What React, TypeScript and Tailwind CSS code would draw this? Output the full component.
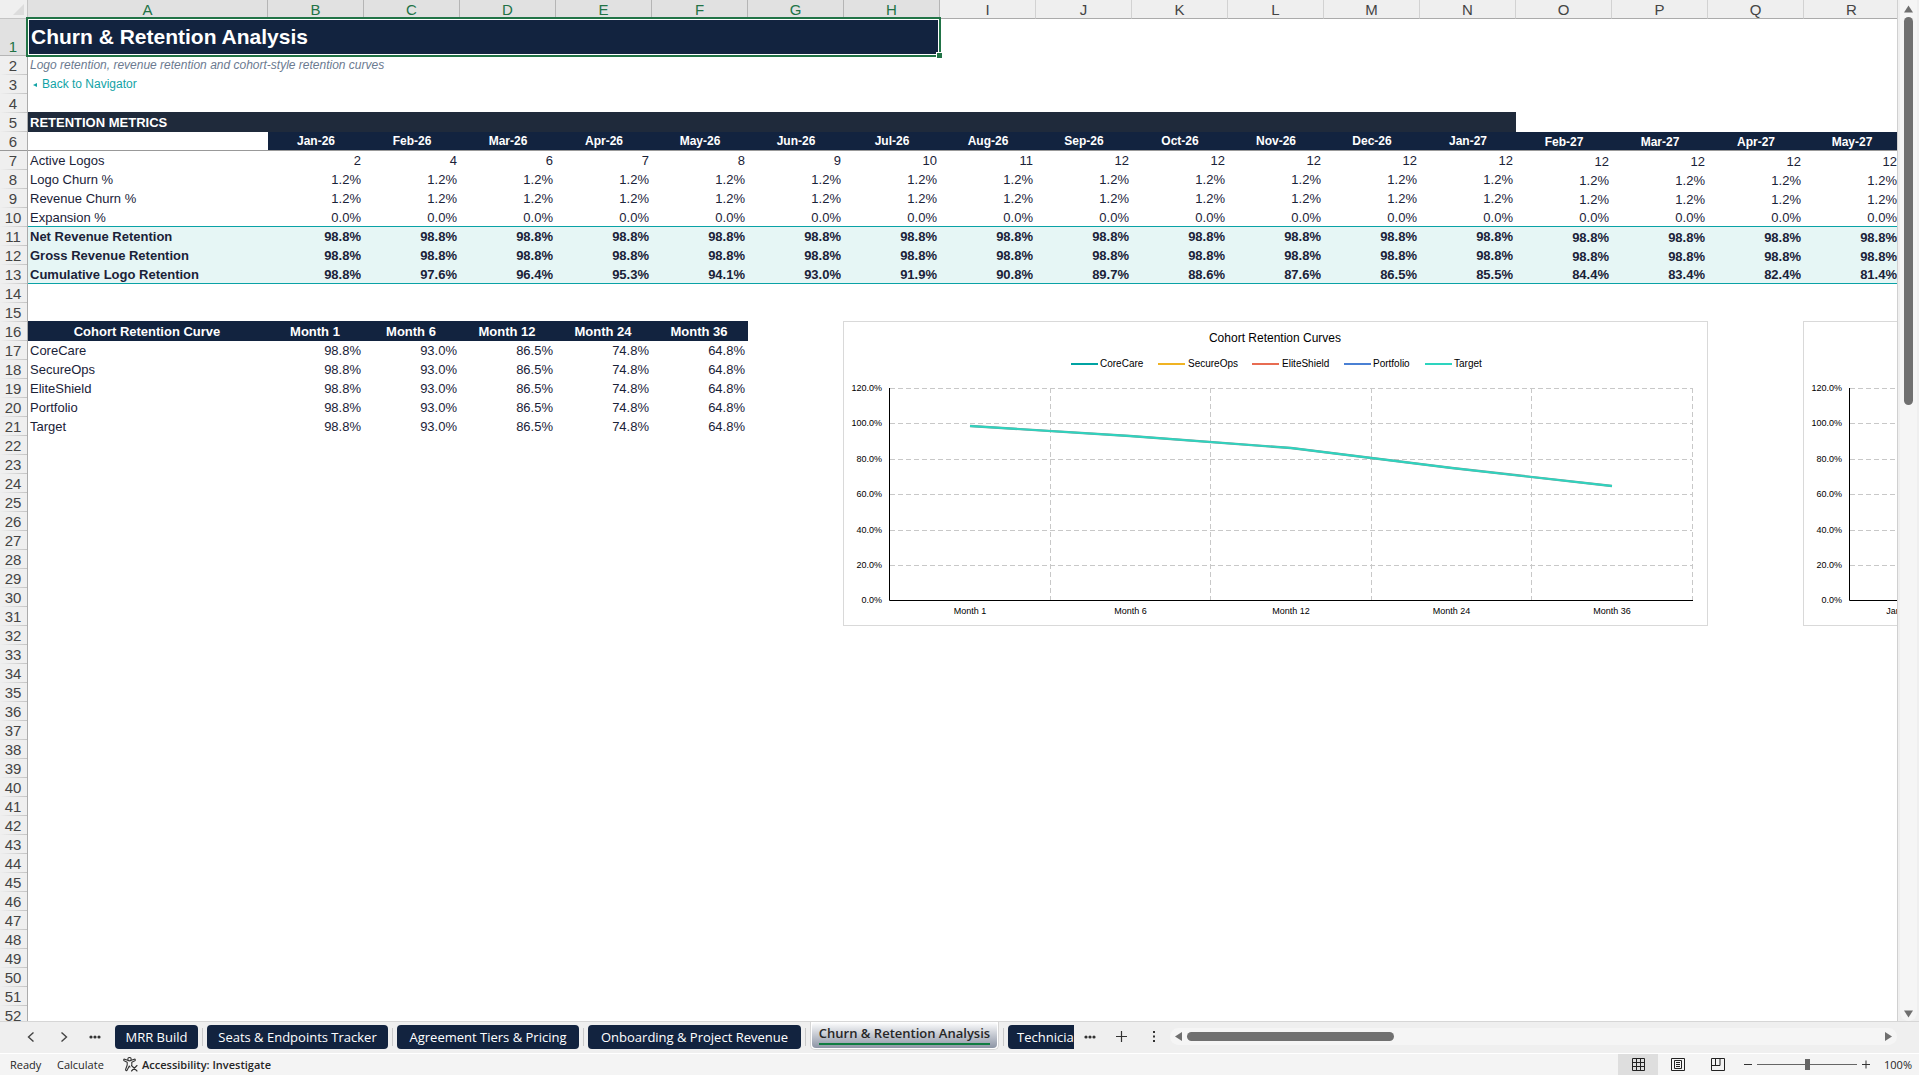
import type { ReactNode } from "react";

const COLUMNS = "ABCDEFGHIJKLMNOPQR".split("");
const SELECTED = "ABCDEFGH";
const MONTHS = [
  "Jan-26", "Feb-26", "Mar-26", "Apr-26", "May-26", "Jun-26", "Jul-26", "Aug-26", "Sep-26",
  "Oct-26", "Nov-26", "Dec-26", "Jan-27", "Feb-27", "Mar-27", "Apr-27", "May-27",
];
const same = (value: string) => MONTHS.map(() => value);

const METRICS = [
  { row: 7, label: "Active Logos", values: ["2", "4", "6", "7", "8", "9", "10", "11", "12", "12", "12", "12", "12", "12", "12", "12", "12"] },
  { row: 8, label: "Logo Churn %", values: same("1.2%") },
  { row: 9, label: "Revenue Churn %", values: same("1.2%") },
  { row: 10, label: "Expansion %", values: same("0.0%") },
  { row: 11, label: "Net Revenue Retention", values: same("98.8%") },
  { row: 12, label: "Gross Revenue Retention", values: same("98.8%") },
  {
    row: 13,
    label: "Cumulative Logo Retention",
    values: [
      "98.8%", "97.6%", "96.4%", "95.3%", "94.1%", "93.0%", "91.9%", "90.8%", "89.7%",
      "88.6%", "87.6%", "86.5%", "85.5%", "84.4%", "83.4%", "82.4%", "81.4%",
    ],
  },
];

const COHORT_MONTHS = ["Month 1", "Month 6", "Month 12", "Month 24", "Month 36"];
const COHORT_VALUES = ["98.8%", "93.0%", "86.5%", "74.8%", "64.8%"];
const COHORTS = ["CoreCare", "SecureOps", "EliteShield", "Portfolio", "Target"];
const EMPTY_ROWS = Array.from({ length: 31 }, (_, i) => i + 22);

function SheetRow({ n, children }: { n: number; children?: ReactNode }) {
  const first = n === 1;
  return (
    <tr className={first ? "h-[37px]" : "h-[19px]"}>
      <th
        scope="row"
        className={
          "border-r border-[#ababab] bg-[length:100%_1px] bg-bottom bg-no-repeat p-0 pr-px text-center text-[15px] leading-[18px] font-normal " +
          (first
            ? "bg-[#e1e1e1] bg-[linear-gradient(to_right,#b5b5b5,#b5b5b5)] align-bottom text-[#217346]"
            : n === 6
              ? "bg-[#efefef] bg-[linear-gradient(to_right,#999,#999)] align-bottom text-[#444]"
              : "bg-[#efefef] bg-[linear-gradient(to_right,#efefef,#c4c4c4)] align-bottom text-[#444]")
        }
      >
        {n}
      </th>
      {children ?? <td colSpan={18} className="p-0" />}
    </tr>
  );
}

const AXIS = ["120.0%", "100.0%", "80.0%", "60.0%", "40.0%", "20.0%", "0.0%"];
const GRID_Y = [67, 102, 138, 173, 209, 244, 279];
const GRID_X = [207, 367, 528, 688, 849];
const LEGEND = [
  { name: "CoreCare", color: "#00a3a3", x: 228, text: 257 },
  { name: "SecureOps", color: "#f0b323", x: 315, text: 345 },
  { name: "EliteShield", color: "#e86c52", x: 409, text: 439 },
  { name: "Portfolio", color: "#4a80d4", x: 501, text: 530 },
  { name: "Target", color: "#2dd4bf", x: 582, text: 611 },
];

interface ChartProps {
  title?: string;
  categories: string[];
  firstX: number;
  points?: string;
  legend?: boolean;
}

function Chart({ title, categories, firstX, points, legend }: ChartProps) {
  return (
    <svg
      role="img"
      aria-label={title ?? "Retention by month"}
      width="865"
      height="305"
      viewBox="0 0 865 305"
      className="block shrink-0 bg-white font-['Liberation_Sans',sans-serif]"
    >
      <rect x="0.5" y="0.5" width="864" height="304" fill="none" stroke="#d9d9d9" />
      {title && (
        <text x="432" y="21" fontSize="12" textAnchor="middle" fill="#000">
          {title}
        </text>
      )}
      {legend &&
        LEGEND.map((item) => (
          <g key={item.name}>
            <path d={`M${item.x} 43h27`} stroke={item.color} strokeWidth="2" />
            <text x={item.text} y="46" fontSize="10" fill="#000">
              {item.name}
            </text>
          </g>
        ))}
      {GRID_Y.slice(0, 6).map((y) => (
        <path key={y} d={`M47 ${y + 0.5}H849`} stroke="#c8c8c8" strokeDasharray="5 3" />
      ))}
      {GRID_X.map((x) => (
        <path key={x} d={`M${x + 0.5} 67V279`} stroke="#c8c8c8" strokeDasharray="5 3" />
      ))}
      <path d="M46.5 67V279.5H850" fill="none" stroke="#000" />
      {AXIS.map((label, i) => (
        <text key={label} x="39" y={GRID_Y[i] + 3} fontSize="9" textAnchor="end" fill="#000">
          {label}
        </text>
      ))}
      {categories.map((label, i) => (
        <text key={label} x={firstX + i * 160.5} y="293" fontSize="9" textAnchor="middle" fill="#000">
          {label}
        </text>
      ))}
      {points && (
        <>
          <polyline points={points} fill="none" stroke="#7a9c98" strokeWidth="2.4" />
          <polyline points={points} fill="none" stroke="#2dd4bf" strokeWidth="1.8" />
        </>
      )}
    </svg>
  );
}

function Sheet() {
  return (
    <main className="relative min-h-0 min-w-0 flex-1 overflow-hidden border-r border-[#d0d0d0] bg-white font-['Liberation_Sans',Arial,sans-serif]">
      <table className="w-[1900px] table-fixed border-separate border-spacing-0 text-[13px] leading-[17px] text-[#1a2238]">
        <colgroup>
          <col className="w-[28px]" />
          <col className="w-[240px]" />
          {COLUMNS.slice(1).map((c) => (
            <col key={c} className="w-[96px]" />
          ))}
        </colgroup>
        <thead>
          <tr className="h-[19px]">
            <th className="border-r border-b border-[#c4c4c4] bg-[#efefef] p-0" aria-label="Select all">
              <svg width="27" height="18" viewBox="0 0 27 18" className="block" aria-hidden="true">
                <path d="M24 4V15H13Z" fill="#dcdcdc" />
              </svg>
            </th>
            {COLUMNS.map((c) => (
              <th
                key={c}
                scope="col"
                className={
                  "border-r border-b p-0 pt-[2px] text-[15px] leading-4 font-normal " +
                  (SELECTED.includes(c)
                    ? "border-r-[#b5b5b5] border-b-[#ababab] bg-[#e1e1e1] text-[#217346]"
                    : "border-r-[#d2d2d2] border-b-[#ababab] bg-[#efefef] text-[#444]")
                }
              >
                {c}
              </th>
            ))}
          </tr>
        </thead>
        <tbody>
          <SheetRow n={1}>
            <td colSpan={8} className="relative bg-[#12233f] p-0 pb-[2px] pl-[3px] align-middle">
              <h1 className="text-[21px] leading-6 font-bold text-white">Churn &amp; Retention Analysis</h1>
              <div className="absolute -top-[2px] -right-px -bottom-px -left-[2px] border-2 border-[#217346]">
                <div className="h-full border border-white" />
                <div className="absolute -right-[4px] -bottom-[4px] size-[7px] border border-white bg-[#217346]" />
              </div>
            </td>
            <td colSpan={10} className="p-0" />
          </SheetRow>
          <SheetRow n={2}>
            <td colSpan={18} className="p-0 pl-[2px] align-middle text-[12px] text-[#6b7a90] italic">
              Logo retention, revenue retention and cohort-style retention curves
            </td>
          </SheetRow>
          <SheetRow n={3}>
            <td colSpan={18} className="p-0 pl-[5px] align-middle text-[12px]">
              <a href="#navigator" className="flex items-center gap-[5px] text-[#12a3a6]">
                <svg width="4" height="4" viewBox="0 0 4 4" aria-hidden="true">
                  <path d="M4 0V4L0 2Z" fill="currentColor" />
                </svg>
                Back to Navigator
              </a>
            </td>
          </SheetRow>
          <SheetRow n={4} />
          <SheetRow n={5}>
            <td colSpan={14} className="bg-[#1f2a3b] p-0 pl-[2px] align-middle font-bold text-white shadow-[0_-1px_0_#1f2a3b]">
              RETENTION METRICS
            </td>
            <td colSpan={4} className="p-0" />
          </SheetRow>
          <SheetRow n={6}>
            <td className="border-b border-[#999] p-0" />
            {MONTHS.map((m, i) => (
              <th
                key={m}
                scope="col"
                className={
                  "border-b border-[#999] bg-[#12233f] p-0 text-center text-[12px] leading-[15px] font-bold text-white " +
                  (i < 13 ? "align-middle" : "align-bottom")
                }
              >
                {m}
              </th>
            ))}
          </SheetRow>
          {METRICS.map(({ row, label, values }) => {
            const total = row > 10;
            const tone =
              (total ? "bg-[#e6f6f5] font-bold " : "font-normal ") +
              (row === 10 || row === 13 ? "border-b border-[#0aa2a6] " : "");
            return (
              <SheetRow key={row} n={row}>
                <th scope="row" className={tone + "p-0 pl-[2px] text-left align-middle"}>
                  {label}
                </th>
                {values.map((v, i) => (
                  <td
                    key={i}
                    className={tone + "p-0 pr-[3px] text-right " + (i < 13 ? "align-middle" : "align-bottom")}
                  >
                    {v}
                  </td>
                ))}
              </SheetRow>
            );
          })}
          <SheetRow n={14} />
          <SheetRow n={15} />
          <SheetRow n={16}>
            {["Cohort Retention Curve", ...COHORT_MONTHS].map((h) => (
              <th key={h} scope="col" className="bg-[#12233f] p-0 pr-[2px] text-center align-middle font-bold text-white shadow-[0_-1px_0_#12233f]">
                {h}
              </th>
            ))}
            <td colSpan={12} className="p-0" />
          </SheetRow>
          {COHORTS.map((name, i) => (
            <SheetRow key={name} n={17 + i}>
              <th scope="row" className="p-0 pl-[2px] text-left align-middle font-normal">
                {name}
              </th>
              {COHORT_VALUES.map((v) => (
                <td key={v} className="p-0 pr-[3px] text-right align-middle">
                  {v}
                </td>
              ))}
              <td colSpan={12} className="p-0" />
            </SheetRow>
          ))}
          {EMPTY_ROWS.map((n) => (
            <SheetRow key={n} n={n} />
          ))}
        </tbody>
      </table>
      <div className="absolute top-[321px] left-[843px] flex gap-[95px]">
        <Chart
          title="Cohort Retention Curves"
          categories={COHORT_MONTHS}
          firstX={127}
          legend
          points="127,105 287,115 448,127 609,147 769,165"
        />
        <Chart categories={["Jan-26"]} firstX={97} />
      </div>
    </main>
  );
}

function VerticalScroll() {
  return (
    <div className="w-[21px] bg-[#efefef] pl-[2px]">
      <div className="flex h-full w-[17px] flex-col items-center rounded-b-full bg-[#f5f5f5]">
        <button aria-label="Scroll up" className="flex h-[17px] w-full items-center justify-center">
          <svg width="9" height="8" viewBox="0 0 9 8">
            <path d="M4.5 0.500L9 7.500H0Z" fill="#6f6f6f" />
          </svg>
        </button>
        <div className="h-[388px] w-[9px] rounded-full bg-[#707070]" />
        <button aria-label="Scroll down" className="mt-auto flex h-[15px] w-full items-center justify-center">
          <svg width="9" height="8" viewBox="0 0 9 8">
            <path d="M4.500 7.500L9 0.500H0Z" fill="#6f6f6f" />
          </svg>
        </button>
      </div>
    </div>
  );
}

const Dots = () => (
  <svg width="12" height="4" viewBox="0 0 12 4" fill="#333">
    <circle cx="2" cy="2" r="1.6" />
    <circle cx="6" cy="2" r="1.6" />
    <circle cx="10" cy="2" r="1.6" />
  </svg>
);

const Divider = () => <div className="mx-1 h-[18px] w-px shrink-0 bg-[#c9c9c9]" />;

function Tab({ width, children }: { width: string; children: string }) {
  return (
    <button className={"h-6 shrink-0 rounded-[4px] bg-[#12233f] text-center whitespace-nowrap text-white " + width}>
      {children}
    </button>
  );
}

function TabBar() {
  return (
    <nav className="flex h-8 shrink-0 items-center border-t border-[#d6d6d6] bg-[#efefef] pr-[22px] pb-[2px] font-['Open_Sans','Noto_Sans',sans-serif] text-[13px] leading-6">
      <div className="flex w-[115px] items-center pl-[27px]">
        <button aria-label="Previous sheet" className="w-[33px]">
          <svg width="8" height="10" viewBox="0 0 8 10" fill="none" stroke="#444" strokeWidth="1.400">
            <path d="M6.500 0.500L1.500 5L6.500 9.500" />
          </svg>
        </button>
        <button aria-label="Next sheet" className="w-[29px]">
          <svg width="8" height="10" viewBox="0 0 8 10" fill="none" stroke="#444" strokeWidth="1.400">
            <path d="M1.500 0.500L6.500 5L1.500 9.500" />
          </svg>
        </button>
        <button aria-label="More sheets">
          <Dots />
        </button>
      </div>
      <Tab width="w-[83px]">MRR Build</Tab>
      <Divider />
      <Tab width="w-[181px]">Seats &amp; Endpoints Tracker</Tab>
      <Divider />
      <Tab width="w-[182px]">Agreement Tiers &amp; Pricing</Tab>
      <Divider />
      <Tab width="w-[213px]">Onboarding &amp; Project Revenue</Tab>
      <Divider />
      <button
        aria-current="page"
        className="-mt-px h-[28px] w-[189px] shrink-0 rounded-b-[5px] border border-t-0 border-[#d6d6d6] bg-white px-px pb-px whitespace-nowrap"
      >
        <span className="flex h-full flex-col items-center rounded-[4px] bg-linear-to-b from-white to-[#8d95a5] leading-[22px] font-semibold text-[#262626]">
          <span className="h-[23px] border-b-2 border-[#107c41]">Churn &amp; Retention Analysis</span>
        </span>
      </button>
      <Divider />
      <div className="w-[66px] shrink-0 overflow-hidden">
        <button className="block h-6 w-[160px] rounded-[4px] bg-[#12233f] pl-[9px] text-left text-white">Technician</button>
      </div>
      <button aria-label="More sheets" className="ml-[10px] w-[32px]">
        <Dots />
      </button>
      <button aria-label="New sheet" className="w-[37px]">
        <svg width="11" height="11" viewBox="0 0 11 11" stroke="#333" strokeWidth="1.200">
          <path d="M5.500 0V11M0 5.500H11" />
        </svg>
      </button>
      <div className="w-[17px]">
        <svg width="2" height="11" viewBox="0 0 2 11" fill="#333" aria-hidden="true">
          <path d="M0 0h2v2H0zM0 4.500h2v2H0zM0 9h2v2H0z" />
        </svg>
      </div>
      <div className="flex h-[17px] min-w-0 flex-1 items-center rounded-full bg-[#f5f5f5] px-[5px]">
        <button aria-label="Scroll left">
          <svg width="7" height="9" viewBox="0 0 7 9">
            <path d="M0 4.500L7 0V9Z" fill="#6f6f6f" />
          </svg>
        </button>
        <div className="ml-[5px] h-[9px] w-[207px] rounded-full bg-[#707070]" />
        <button aria-label="Scroll right" className="ml-auto">
          <svg width="7" height="9" viewBox="0 0 7 9">
            <path d="M7 4.500L0 0V9Z" fill="#6f6f6f" />
          </svg>
        </button>
      </div>
    </nav>
  );
}

function StatusBar() {
  return (
    <footer className="flex h-[22px] shrink-0 items-center border-t border-white bg-[#f4f4f4] pr-[7px] pl-[10px] font-['Open_Sans','Noto_Sans',sans-serif] text-[11px] leading-5 text-[#262626]">
      <span className="w-[47px]">Ready</span>
      <span className="w-[66px]">Calculate</span>
      <button className="flex items-center gap-1 font-semibold">
        <svg width="15" height="15" viewBox="0 0 15 15" fill="none" stroke="#333" strokeWidth="1.100" strokeLinecap="round" strokeLinejoin="round">
          <circle cx="6.500" cy="2.200" r="1.700" />
          <path d="M4.800 3.200L1.700 2.200C.5 2 .4 3.400 1.200 3.800L4.200 5.200V8L2.600 12.500C2.400 13.800 3.800 14 4.200 13L6.300 9L7 10M8.200 3.200L11.300 2.200C12.500 2 12.600 3.400 11.800 3.800L8.800 5.200V7.500" />
          <path d="M8.500 8.500L14 14M14 8.500L8.500 14" />
        </svg>
        Accessibility: Investigate
      </button>
      <div className="ml-auto flex h-full items-center">
        <button aria-label="Normal view" className="flex h-full w-10 items-center justify-center bg-[#dedede]">
          <svg width="13" height="13" viewBox="0 0 13 13" fill="none" stroke="#222">
            <path d="M.5.5h12v12H.5zM4.500.5v12M8.500.5v12M.5 4.500h12M.5 8.500h12" />
          </svg>
        </button>
        <button aria-label="Page layout view" className="flex h-full w-10 items-center justify-center">
          <svg width="14" height="13" viewBox="0 0 14 13" fill="none" stroke="#222">
            <path d="M.5.5h13v12H.5zM3.500 2.500h7v8h-7zM5 4.500h4M5 6.500h4M5 8.500h4" />
          </svg>
        </button>
        <button aria-label="Page break view" className="flex h-full w-10 items-center justify-center">
          <svg width="14" height="13" viewBox="0 0 14 13" fill="none" stroke="#222">
            <path d="M.5.5h13v12H.5zM.5 7.500h8.500V.5M4.500.5v7" />
          </svg>
        </button>
        <button aria-label="Zoom out" className="ml-[6px] flex w-[13px] items-center">
          <svg width="8" height="9" viewBox="0 0 8 9" stroke="#333">
            <path d="M0 4.500H8" />
          </svg>
        </button>
        <input
          type="range"
          aria-label="Zoom"
          min={0}
          max={100}
          defaultValue={50}
          className="h-5 w-[100px] appearance-none bg-transparent bg-[linear-gradient(#666,#666)] bg-[length:100%_1px] bg-center bg-no-repeat [&::-webkit-slider-thumb]:h-[11px] [&::-webkit-slider-thumb]:w-[5px] [&::-webkit-slider-thumb]:appearance-none [&::-webkit-slider-thumb]:bg-[#666]"
        />
        <button aria-label="Zoom in" className="ml-[5px] flex w-[22px] items-center">
          <svg width="8" height="9" viewBox="0 0 8 9" stroke="#333">
            <path d="M0 4.500H8M4 .5V8.500" />
          </svg>
        </button>
        <span>100%</span>
      </div>
    </footer>
  );
}

export default function App() {
  return (
    <div className="flex h-screen flex-col overflow-hidden bg-white">
      <div className="flex min-h-0 flex-1">
        <Sheet />
        <VerticalScroll />
      </div>
      <TabBar />
      <StatusBar />
    </div>
  );
}
